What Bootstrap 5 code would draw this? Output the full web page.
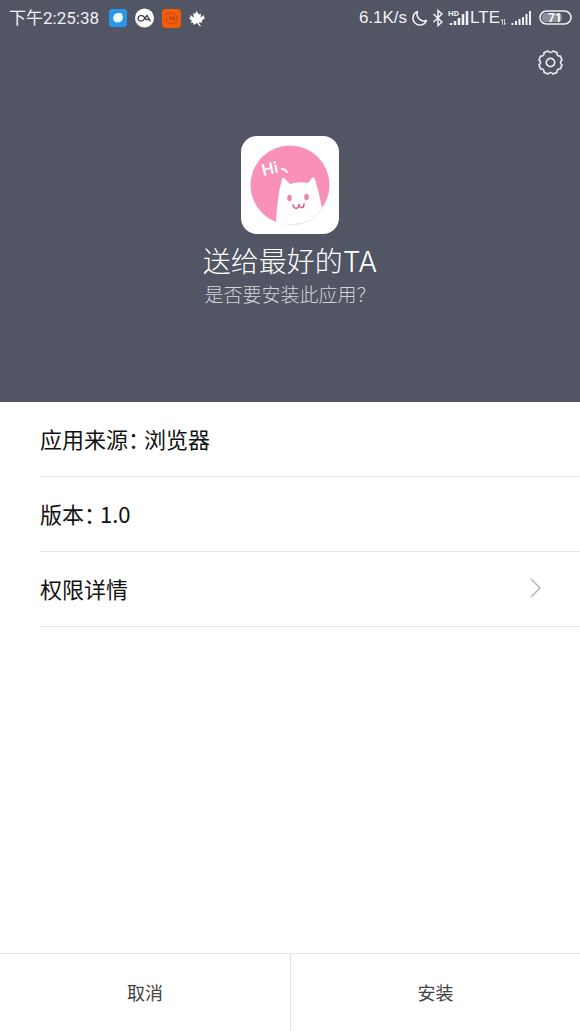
<!DOCTYPE html>
<html lang="zh-CN">
<head>
<meta charset="utf-8">
<meta name="viewport" content="width=device-width, initial-scale=1">
<title>送给最好的TA</title>
<link href="https://cdn.jsdelivr.net/npm/bootstrap@5.3.0/dist/css/bootstrap.min.css" rel="stylesheet">
<style>
  body { font-family: Roboto, "Noto Sans CJK SC", sans-serif; color: #111; line-height: 1.5; }
  .installer-head { background: #525564; padding-bottom: 96px; }
  .status-bar { height: 36px; padding: 0 8px 0 9px; font-size: 17px; line-height: 36px; color: #f1f1f5; }
  .status-icons { gap: 8px; margin-left: 10px; }
  .net-speed, .net-type { font-family: "Liberation Sans", sans-serif; font-size: 17px; }
  .signal-icons { gap: 4px; }
  .settings-row { height: 52px; padding: 0 16px; }
  .settings-btn { line-height: 0; }
  .app-icon { width: 98px; height: 98px; margin-top: 48px; }
  .app-title { font: 300 28px/40px "Noto Sans CJK SC", sans-serif; margin-top: 6px; }
  .app-title span { font-family: Inter, sans-serif; }
  .app-question { font: 300 19px/24px "Noto Sans CJK SC", sans-serif; color: #d3d4d9; }
  .info-list { margin-left: 40px; font-family: "Noto Sans CJK SC", sans-serif; }
  .info-row { height: 75px; border-bottom: 1px solid #e6e6e6; font-size: 22px; line-height: 32px; padding: 0 39px 2px 0; color: #111; }
  .info-row dt, .info-row dd { font-weight: 400; margin: 0; }
  .info-row dt { font-feature-settings: "halt"; margin-right: 5px; }
  .action-bar { height: 78px; border-top: 1px solid #e6e6e6; }
  .action-bar .btn { font-size: 18px; color: #444; padding-top: 8px; }
  .action-bar .btn + .btn { border-left: 1px solid #e0e0e0; }
</style>
</head>
<body class="d-flex flex-column min-vh-100 bg-white">

<header class="installer-head">
  <div class="status-bar d-flex align-items-center justify-content-between">
    <div class="d-flex align-items-center">
      <span>下午2:25:38</span>
      <div class="status-icons d-flex align-items-center">
        <svg width="18" height="18" viewBox="0 0 18 18" aria-hidden="true"><rect width="18" height="18" rx="3" fill="#2798e8"/><path d="M4 9Q4.500 4.500 9 4l3.500 0 1.500 4q-.5 5-5 5.500-4 .5-5-4.500z" fill="#eefaff"/></svg>
        <svg width="19" height="20" viewBox="0 0 19 20" aria-hidden="true"><circle cx="9.500" cy="10" r="9.500" fill="#fff"/><path d="M15.500 13.500 12 7.500 8.500 12Q5 14.500 3.300 11.500 2.500 8 6 7.300 8.500 7.500 10 10l1 1.500h4" fill="none" stroke="#414253" stroke-width="1.300"/></svg>
        <svg width="19" height="19" viewBox="0 0 19 19" aria-hidden="true"><rect width="19" height="19" rx="4" fill="#f45b08"/><path d="M6 5a5.500 5.500 0 1 1-2 4M4 6l3-2" fill="none" stroke="#b84a1c"/><path d="M7 8h2.500M8.200 8v3M10.500 8.500h2v2h-2z" fill="none" stroke="#a34320"/></svg>
        <svg width="16" height="17" viewBox="0 0 16 17" aria-hidden="true"><path d="M7.500 1 10 4.500 12 3.500 11.500 7.500 15 5 14.800 7 16 8 12.500 11 13.500 12.500 9.500 12.500 12 16 11 16.500 8 13 4.500 15 4.500 13 1.500 12.500 3 11 0 8 1.500 7.500 1 5 5 7.500 4 3 6 4z" fill="#fff"/></svg>
      </div>
    </div>
    <div class="signal-icons d-flex align-items-center">
      <span class="net-speed">6.1K/s</span>
      <svg width="17" height="17" viewBox="0 0 17 17" aria-hidden="true"><path d="M6.500 1.500A7 7 0 1 0 15.500 10.500 7 7 0 0 1 6.500 1.500z" fill="none" stroke="#f1f1f5" stroke-width="1.500" stroke-linejoin="round"/></svg>
      <svg width="12" height="18" viewBox="0 0 12 18" aria-hidden="true"><path d="m1.500 5 8.500 8-4 3.500v-15L10 5l-8.500 8" fill="none" stroke="#f1f1f5" stroke-width="1.500"/></svg>
      <div class="d-flex align-items-center">
        <svg width="22" height="18" viewBox="0 0 22 18" aria-hidden="true"><text x="0" y="7" font-family="Roboto" font-size="8" font-weight="700" fill="#f1f1f5">HD</text><path d="M3 14v2M7 12v4M11 9v7M15 5v11M19 2v14" stroke="#f1f1f5" stroke-width="2.500"/></svg>
        <span class="net-type">LTE</span>
        <svg width="7" height="8" viewBox="0 0 7 8" class="mt-2" aria-hidden="true"><path d="M2.500 7V1L1 3M4.500 1v6L6 5" fill="none" stroke="#c6c7cf"/></svg>
      </div>
      <svg width="20" height="18" viewBox="0 0 20 18" aria-hidden="true"><path d="M1.500 14v2M5 12v4M8.500 10v6M12 8v8M15.500 5v11M19 2v14" stroke="#f1f1f5" stroke-width="2"/></svg>
      <svg class="ms-1" width="33" height="16" viewBox="0 0 33 16" role="img" aria-label="71%"><rect x="3" y="3" width="20" height="9" rx="4" fill="#8d8f9b"/><rect x="1" y="1" width="31" height="13" rx="6.500" fill="none" stroke="#f1f1f5" stroke-width="1.500"/><text x="16" y="12" text-anchor="middle" font-family="Roboto" font-size="12" font-weight="700" fill="#fff">71</text></svg>
    </div>
  </div>

  <div class="settings-row d-flex align-items-center justify-content-end">
    <button type="button" class="settings-btn btn p-0 border-0" aria-label="设置">
      <svg width="27" height="27" viewBox="-13.500 -13.500 27 27" fill="none" stroke="#e6e7ec" stroke-width="1.700" stroke-linejoin="round"><path d="M11.500-2.500Q8.500 0 11.500 2.500L9.900 6.400Q6.200 6.200 6.400 9.900L2.500 11.500Q0 8.500-2.500 11.500L-6.400 9.900Q-6.200 6.200-9.900 6.400L-11.500 2.500Q-8.500 0-11.500-2.500L-9.900-6.400Q-6.200-6.200-6.400-9.900L-2.500-11.500Q0-8.500 2.500-11.500L6.400-9.900Q6.200-6.200 9.900-6.400z"/><circle r="4.200"/></svg>
    </button>
  </div>

  <div class="d-flex flex-column align-items-center text-center text-white">
    <svg class="app-icon" viewBox="0 0 98 98" role="img" aria-label="送给最好的TA">
      <rect width="98" height="98" rx="16" fill="#fff"/>
      <circle cx="49" cy="49" r="39.500" fill="#f890b7"/>
      <path d="M35 88Q36 61 41 43q1-3 4 1l4 4q9-3 18-1l4-5q2-2 3 1 4 13 7 29 1 3 1 5Q63 91 35 88z" fill="#fff"/>
      <path d="M82 71Q71 90 47 89" fill="none" stroke="#f7e6ed"/>
      <ellipse cx="48.500" cy="62" rx="2.300" ry="3.200" fill="#ef86ac"/><ellipse cx="65.500" cy="61" rx="2.300" ry="3.200" fill="#ef86ac"/>
      <path d="M52 69q1 4 4 3 2 0 2-4 0 4 3 3.500 2 0 2-3.500" fill="none" stroke="#d95d90" stroke-width="1.500" stroke-linecap="round"/>
      <text x="22" y="40" transform="rotate(-13 22 40)" font-family="Lato" font-size="16" font-weight="700" fill="#fff">Hi</text>
      <path d="M41 33q3 0 5 3" fill="none" stroke="#fff" stroke-width="2" stroke-linecap="round"/>
    </svg>
    <h1 class="app-title mb-0">送给最好的<span>TA</span></h1>
    <p class="app-question mb-0">是否要安装此应用？</p>
  </div>
</header>

<main class="flex-grow-1">
  <dl class="info-list mb-0">
    <div class="info-row d-flex align-items-center"><dt>应用来源：</dt><dd>浏览器</dd></div>
    <div class="info-row d-flex align-items-center"><dt>版本：</dt><dd>1.0</dd></div>
    <div>
      <a href="#permissions" class="info-row d-flex align-items-center justify-content-between text-decoration-none">
        <span>权限详情</span>
        <svg width="12" height="20" viewBox="0 0 12 20" fill="none" stroke="#b5b5b5" stroke-width="1.500" aria-hidden="true"><path d="m2 1 9 9-9 9"/></svg>
      </a>
    </div>
  </dl>
</main>

<footer class="action-bar d-flex">
  <button type="button" class="btn flex-fill w-50 rounded-0 border-0">取消</button>
  <button type="button" class="btn flex-fill w-50 rounded-0 border-top-0 border-bottom-0 border-end-0">安装</button>
</footer>

<script src="https://cdn.jsdelivr.net/npm/bootstrap@5.3.0/dist/js/bootstrap.bundle.min.js"></script>
</body>
</html>
